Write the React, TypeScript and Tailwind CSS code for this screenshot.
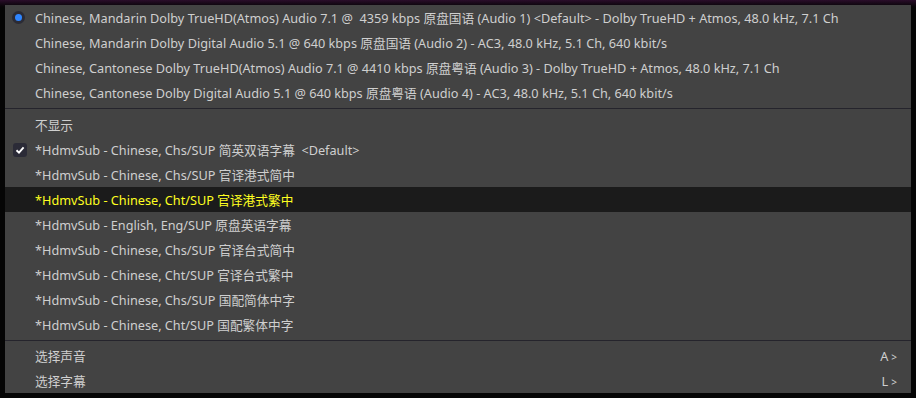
import React from 'react';

const audio = [
    'Chinese, Mandarin Dolby TrueHD(Atmos) Audio 7.1 @  4359 kbps 原盘国语 (Audio 1) <Default> - Dolby TrueHD + Atmos, 48.0 kHz, 7.1 Ch',
    'Chinese, Mandarin Dolby Digital Audio 5.1 @ 640 kbps 原盘国语 (Audio 2) - AC3, 48.0 kHz, 5.1 Ch, 640 kbit/s',
    'Chinese, Cantonese Dolby TrueHD(Atmos) Audio 7.1 @ 4410 kbps 原盘粤语 (Audio 3) - Dolby TrueHD + Atmos, 48.0 kHz, 7.1 Ch',
    'Chinese, Cantonese Dolby Digital Audio 5.1 @ 640 kbps 原盘粤语 (Audio 4) - AC3, 48.0 kHz, 5.1 Ch, 640 kbit/s',
];

const subs = [
    '不显示',
    '*HdmvSub - Chinese, Chs/SUP 简英双语字幕  <Default>',
    '*HdmvSub - Chinese, Chs/SUP 官译港式简中',
    '*HdmvSub - Chinese, Cht/SUP 官译港式繁中',
    '*HdmvSub - English, Eng/SUP 原盘英语字幕',
    '*HdmvSub - Chinese, Chs/SUP 官译台式简中',
    '*HdmvSub - Chinese, Cht/SUP 官译台式繁中',
    '*HdmvSub - Chinese, Chs/SUP 国配简体中字',
    '*HdmvSub - Chinese, Cht/SUP 国配繁体中字',
];

function Row({ children, mark, hover, right }: { children: React.ReactNode; mark?: 'radio' | 'check'; hover?: boolean; right?: string }) {
    return (
        <div className={`flex h-[25px] items-center pt-[2px] ${hover ? 'bg-[#1b1b1b] text-[#ffff20]' : 'text-[#cfcfcf]'}`}>
            <div className="flex w-[30px] shrink-0 items-center justify-center pb-[2px]">
                {mark === 'radio' && (
                    <div className="-ml-[4px] flex h-[13px] w-[13px] items-center justify-center rounded-full bg-[#2b2b35]">
                        <div className="h-[7px] w-[7px] rounded-full bg-[#2f86ff]" />
                    </div>
                )}
                {mark === 'check' && (
                    <div className="flex h-[14px] w-[14px] items-center justify-center rounded-[3px] bg-[#2b2b37]">
                        <svg width="10" height="10" viewBox="0 0 10 10">
                            <path d="M1.5 5.2 L4 7.6 L8.6 2.4" stroke="#ffffff" strokeWidth="1.9" fill="none" />
                        </svg>
                    </div>
                )}
            </div>
            <span className="whitespace-pre">{children}</span>
            {right && (
                <span className="ml-auto pr-[14px] text-[#cfcfcf]">
                    {right}
                    <span className="ml-[3px] text-[10px]">&gt;</span>
                </span>
            )}
        </div>
    );
}

export default function App() {
    return (
        <div
            className="h-[398px] w-[916px] overflow-hidden p-[5px] text-[12.7px]"
            style={{ fontFamily: '"Noto Sans", "Noto Sans CJK SC", sans-serif', background: 'linear-gradient(to bottom, #2a0d2a 0px, #0a050a 6px, #050505 8px)' }}
        >
            <div className="h-[388px] w-[906px] bg-[#434343] leading-none">
                {audio.map((a, i) => (
                    <Row key={i} mark={i === 0 ? 'radio' : undefined}>{a}</Row>
                ))}
                <div className="py-[3px]">
                    <div className="h-px bg-[#25242c]" />
                </div>
                {subs.map((s, i) => (
                    <Row key={i} mark={i === 1 ? 'check' : undefined} hover={i === 3}>{s}</Row>
                ))}
                <div className="pb-[2px] pt-[3px]">
                    <div className="h-px bg-[#25242c]" />
                </div>
                <Row right="A">选择声音</Row>
                <Row right="L">选择字幕</Row>
            </div>
        </div>
    );
}
